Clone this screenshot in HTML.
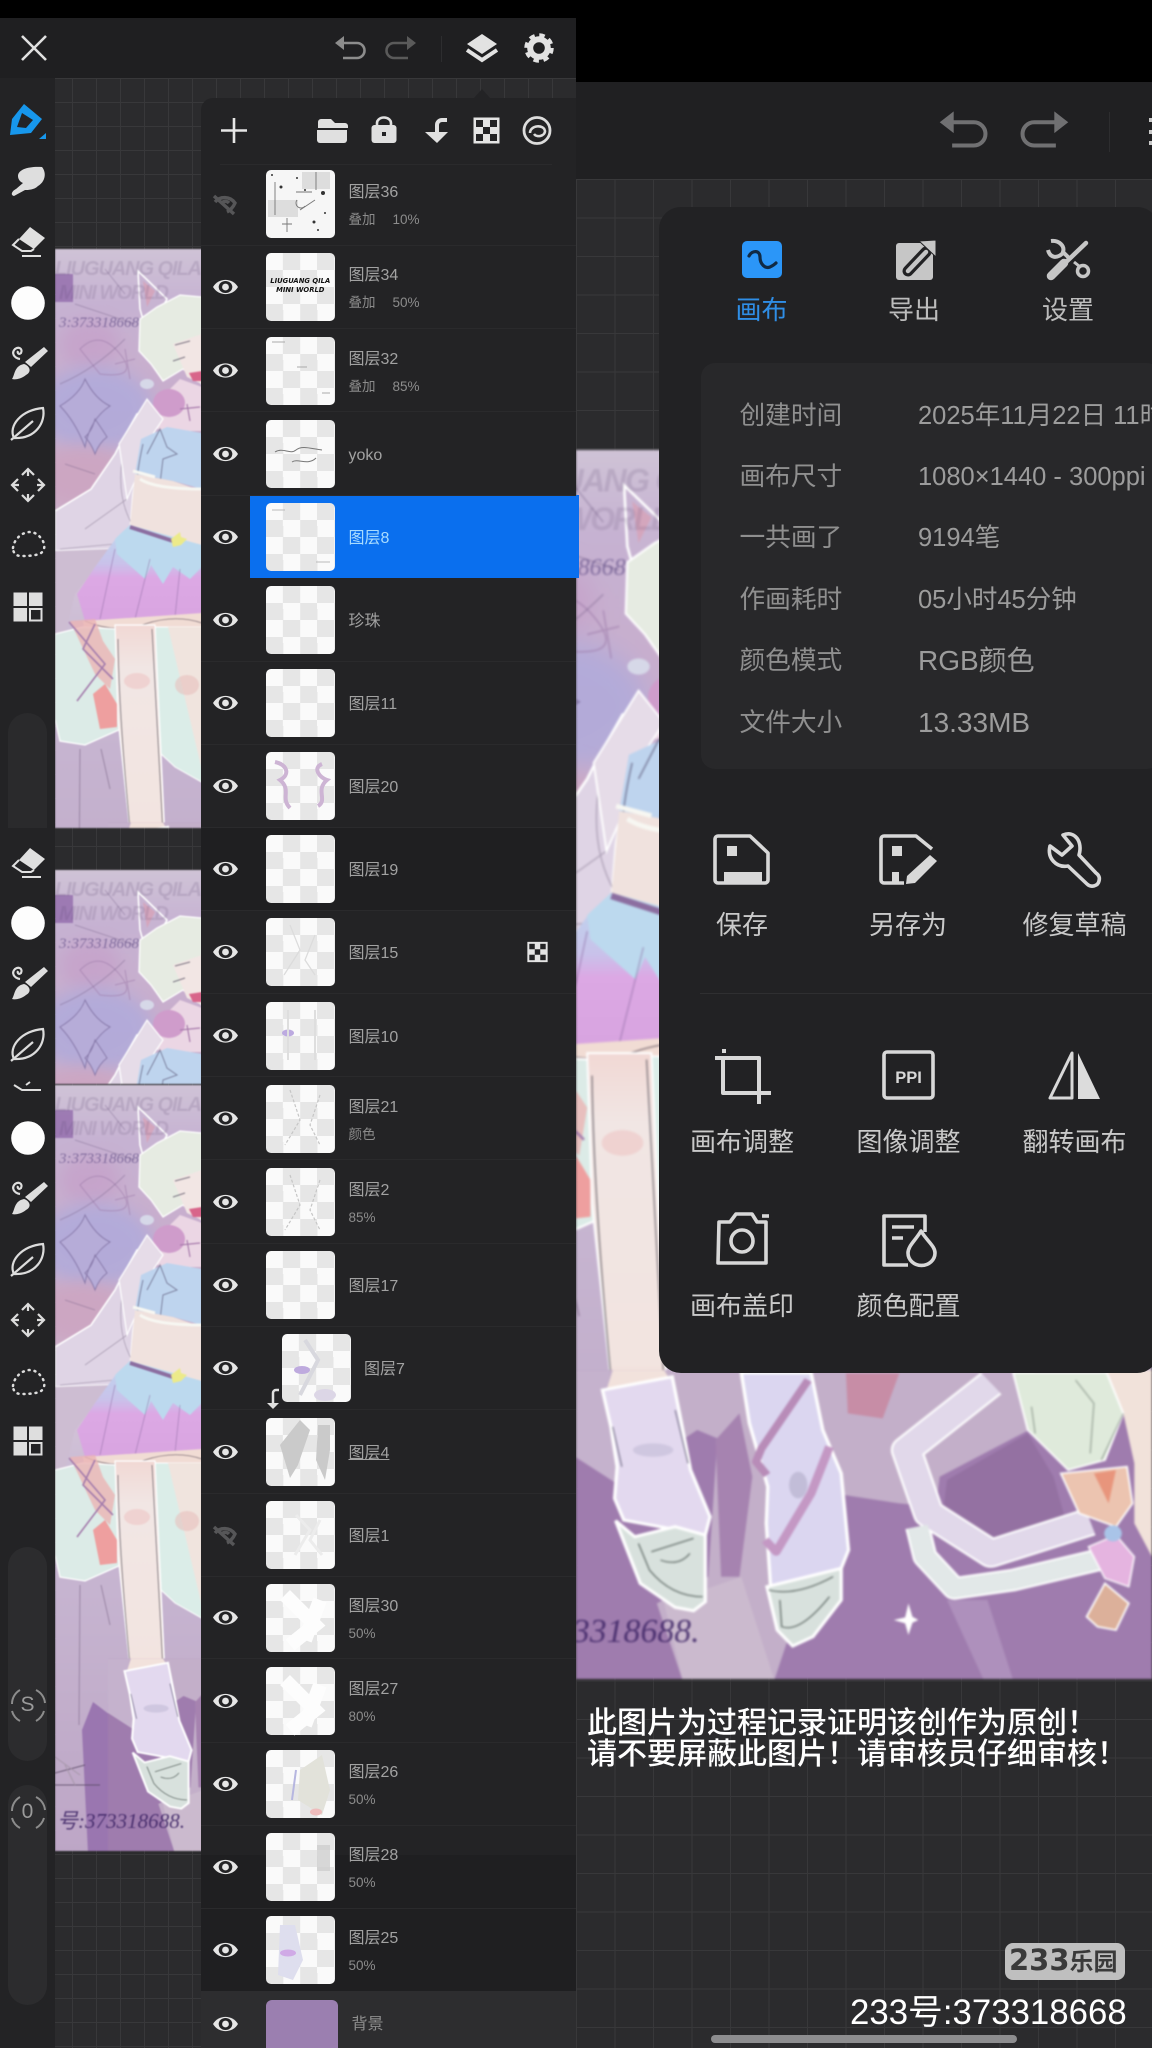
<!DOCTYPE html>
<html><head><meta charset="utf-8"><style>
*{margin:0;padding:0;box-sizing:border-box}
html,body{width:1152px;height:2048px;background:#000;overflow:hidden}
body{position:relative;font-family:"Liberation Sans","Noto Sans CJK SC",sans-serif}
.a{position:absolute}
.grid{background-color:#2b2b2d;background-image:linear-gradient(#38383a 1px,transparent 1px),linear-gradient(90deg,#38383a 1px,transparent 1px)}
.r{position:absolute;left:201px;width:375px;height:83px;border-bottom:1px solid #2a2a2c}
.t{position:absolute;left:65px;top:7.5px;width:68.5px;height:68px;border-radius:5px;background:conic-gradient(#e6e6e6 25%,#fafafa 0 50%,#e6e6e6 0 75%,#fafafa 0) 0 0/34.2px 34px;overflow:hidden}
.n,.s{position:absolute;left:147.5px;height:0;line-height:0;white-space:nowrap}
.n{font-size:16px;color:#a2a2a2;top:43.5px}
.n.u{top:30.5px}
.s{font-size:13.5px;color:#8c8c8c;top:57.5px}
.s span{margin-left:17px}
.c{position:absolute;height:0;line-height:0;white-space:nowrap;text-align:center;transform:translateX(-50%);font-size:26px;color:#c9c9c9}
.l{position:absolute;left:739.5px;height:0;line-height:0;font-size:25.7px;color:#8f8f8f;white-space:nowrap}
.v{position:absolute;left:918px;height:0;line-height:0;font-size:25.5px;color:#9c9c9c;white-space:nowrap}
.ls{filter:blur(.7px)}
</style></head><body>

<!-- right screen -->
<div class="a" style="left:576px;top:82px;width:576px;height:97px;background:#202022"></div>
<div class="a grid" style="left:576px;top:179px;width:576px;height:1869px;background-size:38.5px 38.5px"></div>
<svg class="a" style="left:576px;top:450px;filter:blur(1.1px)" width="576" height="1229" viewBox="53 0 359.1 766.2" preserveAspectRatio="none">
<defs>
<linearGradient id="ag" x1="0" y1="0" x2="0" y2="1"><stop offset="0" stop-color="#cfc3d6"/><stop offset=".07" stop-color="#c6b2d2"/><stop offset=".18" stop-color="#c8aecd"/><stop offset=".35" stop-color="#cbafc9"/><stop offset=".42" stop-color="#d4c4d8"/><stop offset=".5" stop-color="#cbbcd4"/><stop offset=".65" stop-color="#c6b4d0"/><stop offset=".8" stop-color="#c2aecb"/><stop offset="1" stop-color="#bda6c6"/></linearGradient>
<linearGradient id="sk" x1="0" y1="0" x2="0" y2="1"><stop offset="0" stop-color="#bcd8ee"/><stop offset=".4" stop-color="#c9c2ea"/><stop offset=".55" stop-color="#dca8e4"/><stop offset="1" stop-color="#d8a4e0"/></linearGradient>
<linearGradient id="lg" x1="0" y1="0" x2="0" y2="1"><stop offset="0" stop-color="#f1d8d4"/><stop offset=".2" stop-color="#f1e6e4"/><stop offset=".9" stop-color="#f2e4e0"/><stop offset="1" stop-color="#f2d4cc"/></linearGradient>
<filter id="bl" x="-30%" y="-30%" width="160%" height="160%"><feGaussianBlur stdDeviation="8"/></filter>
<g id="art">
<rect width="412" height="766" fill="url(#ag)"/>
<rect x="0" y="25" width="18" height="28" fill="#8e66a8" opacity=".75"/>
<ellipse cx="35" cy="95" rx="30" ry="25" fill="#c499c6" opacity=".5" filter="url(#bl)"/>
<ellipse cx="40" cy="160" rx="58" ry="42" fill="#aeaadc" opacity=".8" filter="url(#bl)"/>
<ellipse cx="28" cy="228" rx="50" ry="30" fill="#cca6c2" filter="url(#bl)"/>
<path d="M5,157 Q25,145 30,130 Q40,150 55,157 Q35,170 30,198 Q20,172 5,157ZM40,170 Q47,180 52,188 Q44,194 40,205 Q36,194 30,188 Q37,182 40,170Z" fill="#b6acd8" stroke="#78689a" stroke-width="1" stroke-opacity=".7"/>
<path d="M25,100Q45,80 65,105T45,125ZM60,115L80,110M70,100L75,130" fill="none" stroke="#9a78a8" stroke-width="1" opacity=".55"/>
<path d="M20,55L80,75M50,20L70,45M5,135Q40,120 70,90M10,215L40,225" stroke="#6e5a80" stroke-width="1" opacity=".35" fill="none"/>
<!-- sleeve -->
<polygon points="0,262 36,240 60,205 65,195 82,165 98,175 85,205 78,245 75,282 55,300 0,302" fill="#dfd4e5" stroke="#fff" stroke-width="1.6"/>
<path d="M5,300L60,295M30,280L72,250M68,205Q60,250 80,280" stroke="#8d8098" stroke-width=".8" fill="none" opacity=".6"/>
<polygon points="0,302 55,300 20,345 10,385 0,385" fill="#cdbdd2"/>
<!-- hair/head -->
<polygon points="83,22 112,50 102,68 90,78 85,60" fill="#c8b4d2" stroke="#fff" stroke-width="1.6"/>
<polygon points="88,32 100,42 92,58" fill="#d9a0b4" opacity=".7"/>
<polygon points="95,160 125,130 147,138 147,182 108,182 90,175" fill="#ebd6e4"/>
<polygon points="85,70 102,58 125,46 147,48 147,135 128,120 108,132 96,115 84,102" fill="#e6ebe2" stroke="#fff" stroke-width="1.3"/>
<polygon points="118,95 147,85 147,135 132,128" fill="#f2e6e4"/>
<path d="M120,96L135,92M118,112L130,108" stroke="#5f586a" stroke-width="1" opacity=".8"/>
<polygon points="134,124 147,122 147,132 138,132" fill="#d8658a"/>
<ellipse cx="114" cy="154" rx="16" ry="14" fill="#cf9ccb"/>
<ellipse cx="92" cy="135" rx="7" ry="5" fill="#d6d8e8"/>
<path d="M132,155L135,172M125,160L145,158" stroke="#a87cac" stroke-width="1.2"/>
<!-- arm -->
<polygon points="64,195 92,150 108,170 88,200 80,232 72,250" fill="#e6dce8" stroke="#fff" stroke-width="1.2"/>
<!-- top -->
<polygon points="86,190 112,178 147,184 147,240 118,232 80,225" fill="#bed4ee"/>
<path d="M92,205L105,180L112,198L122,205L108,210L105,235M88,195Q80,230 82,250" fill="none" stroke="#6a6a88" stroke-width="1" opacity=".75"/>
<polygon points="80,225 118,232 147,242 147,296 118,290 75,277" fill="#f0e2de"/>
<path d="M78,222L100,228M85,230Q100,240 147,240" stroke="#f7f7f2" stroke-width="3" fill="none"/>
<!-- skirt -->
<polygon points="62,288 75,276 147,298 147,368 30,372 22,345 40,318" fill="url(#sk)"/>
<polygon points="62,305 90,330 96,316 108,335 118,318 135,330 147,318 147,296 75,276 60,290" fill="#bcd9ee"/>
<path d="M75,278L118,292" stroke="#8c6ea0" stroke-width="4"/>
<polygon points="116,290 125,283 126,288 132,290 126,296 118,298" fill="#ecea8a"/>
<path d="M60,300L45,370M95,310L80,370M125,320L120,368" stroke="#8a68a0" stroke-width=".9" opacity=".5"/>
<polygon points="28,372 147,364 147,382 30,385" fill="#f1dcd4"/>
<path d="M30,372Q60,385 90,375T147,374" stroke="#8a7a80" stroke-width=".8" fill="none"/>
<!-- lower cloth & legs -->
<polygon points="0,385 28,378 62,380 66,480 30,496 5,492 0,470" fill="#dcebe7" stroke="#fff" stroke-width="1.3"/>
<polygon points="15,372 40,370 48,392 60,410 55,440 40,425" fill="#ebb4b4" opacity=".8"/>
<path d="M14,373L50,415L22,452M40,375L28,400L58,430" stroke="#a47cac" stroke-width="1.6" fill="none"/>
<polygon points="38,445 50,435 62,455 62,478 45,480" fill="#ee9f9f"/>
<polygon points="100,378 150,378 150,535 120,518 106,505 103,450" fill="#dbede8" stroke="#fff" stroke-width="1"/>
<polygon points="113,378 150,378 150,534" fill="#f0e4de"/>
<polygon points="60,376 100,376 110,590 76,592 63,470" fill="url(#lg)" stroke="#fff" stroke-width="1.2"/>
<path d="M97,380L108,585M63,390Q64,470 76,590" stroke="#5c5860" stroke-width=".8" fill="none" opacity=".8"/>
<ellipse cx="82" cy="432" rx="13" ry="8" fill="#eec8c6" opacity=".65"/>
<ellipse cx="132" cy="436" rx="12" ry="10" fill="#e8c0bc" opacity=".6"/>
<path d="M25,500L24,640M46,500L55,540" stroke="#8f7a9a" stroke-width="1.1" fill="none" opacity=".7"/>
<polygon points="27,645 38,617 75,645 78,678 113,768 33,768" fill="#9a76b0"/>
<path d="M0,700H45M0,688L30,680" stroke="#5a4a66" stroke-width="1" opacity=".8"/>
<path d="M10,680L20,700M0,672L25,690" stroke="#a898ac" stroke-width="1"/>
<!-- lower group drawn in zoom coords -->
<g transform="matrix(0.229,0,0,0.2078,53,573.6)">
<rect x="0" y="0" width="1568" height="930" fill="#9f7cae"/>
<polygon points="0,0 100,0 110,340 0,262" fill="#c5b2cd"/>
<polygon points="90,0 1250,0 1250,170 990,320 980,410 880,400 730,375 700,400 540,930 290,930 220,700 360,620 385,205 330,180 110,340" fill="#c3afc9"/>
<polygon points="380,210 445,130 480,320 445,620 395,620" fill="#a683b0"/>
<polygon points="240,700 450,620 540,930 290,930" fill="#cbbace"/>
<polygon points="735,10 880,10 835,145 740,130" fill="#c78da6"/>
<polygon points="1010,330 1230,190 1300,320 1330,440 1120,510 1000,420" fill="#9471a2"/>
<polygon points="1010,690 1120,690 1190,930 1110,930" fill="#ae90bc"/>
<polyline points="1130,40 900,240 960,430 1130,550 1400,455" fill="none" stroke="#fff" stroke-width="86" stroke-linejoin="round"/>
<polyline points="930,470 950,560 1030,655 1190,630 1420,570" fill="none" stroke="#fff" stroke-width="68" stroke-linejoin="round"/>
<polyline points="1130,40 900,240 960,430 1130,550 1400,455" fill="none" stroke="#e1d8ea" stroke-width="74" stroke-linejoin="round"/>
<polyline points="930,470 950,560 1030,655 1190,630 1420,570" fill="none" stroke="#e2e8e8" stroke-width="56" stroke-linejoin="round"/>
<polygon points="1440,0 1568,0 1568,560 1520,460 1520,280 1490,130" fill="#f1e2da"/>
<polygon points="1190,8 1445,8 1490,130 1440,270 1340,300 1230,180" fill="#dfeadb" stroke="#fff" stroke-width="5"/>
<path d="M1240,110L1250,190M1360,30L1410,100L1400,250M1490,130L1430,270" stroke="#6e7a70" stroke-width="3" fill="none" opacity=".7"/>
<polygon points="1320,310 1500,290 1515,400 1470,470 1370,430" fill="#ecc4b0" stroke="#fff" stroke-width="5"/>
<polygon points="1410,310 1470,300 1450,400" fill="#e8957c"/>
<polygon points="1390,740 1440,640 1505,700 1470,780 1420,770" fill="#dcb09a" stroke="#fff" stroke-width="5"/>
<polygon points="1395,530 1470,495 1520,560 1505,650 1440,625" fill="#e5b4e0" stroke="#fff" stroke-width="4"/>
<circle cx="1462" cy="490" r="24" fill="#a9c4e8"/>
<path d="M905,700 L916,740 L932,750 L916,758 L905,795 L896,760 L865,750 L896,742Z" fill="#fff"/>
<!-- left foot -->
<polygon points="100,0 240,0 262,40 80,70" fill="#f2e2dc"/>
<polygon points="72,60 262,20 282,130 312,300 365,440 352,495 130,450 105,385 112,290 95,170" fill="#e3d9ef" stroke="#fff" stroke-width="9"/>
<ellipse cx="210" cy="240" rx="55" ry="20" fill="#cfc7e0"/>
<path d="M100,170L125,290M270,120L305,280" stroke="#54506a" stroke-width="3" opacity=".8"/>
<polygon points="108,452 160,500 270,470 352,495 352,695 320,722 270,712 175,640" fill="#d8e1dd" stroke="#fff" stroke-width="9"/>
<path d="M170,520L200,600Q260,680 345,680M205,545L320,505M230,570Q280,590 310,550" stroke="#4f5a56" stroke-width="3" fill="none"/>
<!-- right foot -->
<polygon points="450,8 640,8 672,180 722,310 742,540 722,595 530,655 518,460 522,350 472,160" fill="#dbd6f0" stroke="#fff" stroke-width="9"/>
<ellipse cx="605" cy="345" rx="25" ry="40" fill="#c2bdd8"/>
<polygon points="520,650 722,595 722,690 645,800 590,828 548,780" fill="#d8e1dd" stroke="#fff" stroke-width="9"/>
<path d="M525,660Q600,680 700,620M555,690L560,770Q610,790 690,680" stroke="#4f5a56" stroke-width="3" fill="none"/>
<path d="M632,30L505,235L490,275L520,315" stroke="#b88cb8" stroke-width="22" fill="none" stroke-linejoin="round"/>
<path d="M690,230L640,370L545,545L515,510" stroke="#c498c4" stroke-width="24" fill="none" stroke-linejoin="round"/>
</g>
</g>
</defs>
<use href="#art"/>
<text x="0" y="26" font-family="Liberation Sans" font-size="20" font-weight="700" font-style="italic" fill="#54406a" opacity=".16" textLength="147">LIUGUANG QILA</text>
<text x="4" y="50" font-family="Liberation Sans" font-size="20" font-weight="700" font-style="italic" fill="#54406a" opacity=".14" textLength="110">MINI WORLD</text>
<text x="4" y="78" font-family="Liberation Serif" font-size="15" font-style="italic" fill="#4d3a78" opacity=".55" textLength="80">3:373318668</text>
<text x="2" y="743" font-family="Liberation Serif" font-size="21" font-style="italic" fill="#3e2566" opacity=".85" textLength="128">号:373318688.</text>
</svg>

<!-- popup -->
<div class="a" style="left:659px;top:207px;width:500px;height:1166px;background:#222224;border-radius:22px"></div>
<div class="a" style="left:701px;top:363px;width:460px;height:406px;background:#28282a;border-radius:14px"></div>
<div class="a" style="left:700px;top:993px;width:452px;height:1px;background:#2f2f31"></div>

<div class="c" style="left:761.5px;top:310px;color:#2f8ee6">画布</div>
<div class="c" style="left:914px;top:310px;color:#bcbcbc">导出</div>
<div class="c" style="left:1068px;top:310px;color:#bcbcbc">设置</div>

<div class="l" style="top:415.5px">创建时间</div><div class="v" style="top:415.5px">2025年11月22日 11时</div>
<div class="l" style="top:477px">画布尺寸</div><div class="v" style="top:477px">1080×1440 - 300ppi</div>
<div class="l" style="top:538px">一共画了</div><div class="v" style="top:538px">9194笔</div>
<div class="l" style="top:599.5px">作画耗时</div><div class="v" style="top:599.5px">05小时45分钟</div>
<div class="l" style="top:660.5px">颜色模式</div><div class="v" style="top:660.5px;font-size:28px">RGB颜色</div>
<div class="l" style="top:722.5px">文件大小</div><div class="v" style="top:722.5px;font-size:28px">13.33MB</div>

<div class="c" style="left:742px;top:925px">保存</div>
<div class="c" style="left:908px;top:925px">另存为</div>
<div class="c" style="left:1074.5px;top:925px">修复草稿</div>
<div class="c" style="left:742px;top:1142px">画布调整</div>
<div class="c" style="left:908.5px;top:1142px">图像调整</div>
<div class="c" style="left:1074.5px;top:1142px">翻转画布</div>
<div class="c" style="left:742px;top:1306px">画布盖印</div>
<div class="c" style="left:908.5px;top:1306px">颜色配置</div>

<div class="a" style="left:587px;top:1709px;font-size:30px;line-height:30.5px;color:#fff;white-space:nowrap;font-weight:500">此图片为过程记录证明该创作为原创！<br>请不要屏蔽此图片！请审核员仔细审核！</div>
<div class="a" style="left:1005px;top:1943px;width:120px;height:37px;background:#bfbfbf;border-radius:8px;color:#3a3a3a;font-weight:700;line-height:37px;white-space:nowrap;padding-left:4px"><span style="font:700 29px 'DejaVu Sans',sans-serif">233</span><span style="font-size:24px">乐园</span></div>
<div class="a" style="left:850px;top:1991px;width:290px;font-size:34.8px;line-height:43px;color:#fff;white-space:nowrap">233号:373318668</div>
<div class="a" style="left:711px;top:2035px;width:306px;height:8px;background:#8d8d8f;border-radius:4px"></div>

<!-- left screen -->
<div class="a grid" style="left:0;top:78px;width:576px;height:1970px;background-size:24px 24px"></div>
<div class="a" style="left:0;top:18px;width:576px;height:60px;background:#1f1f21"></div>
<svg class="a ls" style="left:55px;top:249px" width="147" height="579" viewBox="0 0 147 579">
<use href="#art"/>
<text x="0" y="26" font-family="Liberation Sans" font-size="20" font-weight="700" font-style="italic" fill="#54406a" opacity=".16" textLength="147">LIUGUANG QILA</text>
<text x="4" y="50" font-family="Liberation Sans" font-size="20" font-weight="700" font-style="italic" fill="#54406a" opacity=".14" textLength="110">MINI WORLD</text>
<text x="4" y="78" font-family="Liberation Serif" font-size="15" font-style="italic" fill="#4d3a78" opacity=".55" textLength="80">3:373318668</text>
</svg>
<svg class="a ls" style="left:55px;top:870px" width="147" height="214" viewBox="0 0 147 214">
<use href="#art"/>
<text x="0" y="26" font-family="Liberation Sans" font-size="20" font-weight="700" font-style="italic" fill="#54406a" opacity=".16" textLength="147">LIUGUANG QILA</text>
<text x="4" y="50" font-family="Liberation Sans" font-size="20" font-weight="700" font-style="italic" fill="#54406a" opacity=".14" textLength="110">MINI WORLD</text>
<text x="4" y="78" font-family="Liberation Serif" font-size="15" font-style="italic" fill="#4d3a78" opacity=".55" textLength="80">3:373318668</text>
</svg>
<svg class="a ls" style="left:55px;top:1085px" width="147" height="766" viewBox="0 0 147 766">
<use href="#art"/>
<text x="0" y="26" font-family="Liberation Sans" font-size="20" font-weight="700" font-style="italic" fill="#54406a" opacity=".16" textLength="147">LIUGUANG QILA</text>
<text x="4" y="50" font-family="Liberation Sans" font-size="20" font-weight="700" font-style="italic" fill="#54406a" opacity=".14" textLength="110">MINI WORLD</text>
<text x="4" y="78" font-family="Liberation Serif" font-size="15" font-style="italic" fill="#4d3a78" opacity=".55" textLength="80">3:373318668</text>
<text x="2" y="743" font-family="Liberation Serif" font-size="21" font-style="italic" fill="#3e2566" opacity=".85" textLength="128">号:373318688.</text>
</svg>

<div class="a" style="left:0;top:78px;width:55px;height:1970px;background:#232325"></div>
<div class="a" style="left:8px;top:713px;width:39px;height:115px;background:#2a2a2c;border-radius:20px 20px 0 0"></div>
<div class="a" style="left:8px;top:1547px;width:39px;height:214px;background:#2c2c2e;border-radius:20px"></div>
<div class="a" style="left:8px;top:1785px;width:39px;height:220px;background:#2c2c2e;border-radius:20px"></div>
<div class="a" style="left:0;top:1705px;width:55px;height:0;line-height:0;text-align:center;font-size:21px;color:#9a9a9a">S</div>
<div class="a" style="left:0;top:1812px;width:55px;height:0;line-height:0;text-align:center;font-size:21px;color:#9a9a9a">0</div>

<div class="a" style="left:201px;top:98px;width:375px;height:1950px;background:#232325;border-radius:12px 0 0 0"></div>
<div class="a" style="left:201px;top:828px;width:375px;height:82px;background:#1f1f21"></div>
<div class="a" style="left:201px;top:1855px;width:375px;height:136px;background:#1f1f21"></div>
<div class="a" style="left:201px;top:1991px;width:375px;height:57px;background:#2d2d2f"></div>
<div class="a" style="left:250px;top:495px;width:329px;height:83px;background:#0a6fee"></div>

<div class="r" style="top:162.5px"><div class="t" style="background:#f6f6f6"></div><div class="n u">图层36</div><div class="s">叠加<span>10%</span></div></div>
<div class="r" style="top:245.5px"><div class="t"><div style="font:italic 700 6.8px/9px 'DejaVu Sans',sans-serif;color:#111;text-align:center;margin-top:24px;white-space:nowrap">LIUGUANG QILA<br>MINI WORLD</div></div><div class="n u">图层34</div><div class="s">叠加<span>50%</span></div></div>
<div class="r" style="top:329px"><div class="t"></div><div class="n u">图层32</div><div class="s">叠加<span>85%</span></div></div>
<div class="r" style="top:412.5px"><div class="t"></div><div class="n">yoko</div></div>
<div class="r" style="top:495.5px;border-color:transparent"><div class="t"></div><div class="n" style="color:#a8dcff">图层8</div></div>
<div class="r" style="top:578.5px"><div class="t"></div><div class="n">珍珠</div></div>
<div class="r" style="top:661.5px"><div class="t"></div><div class="n">图层11</div></div>
<div class="r" style="top:744.5px"><div class="t"></div><div class="n">图层20</div></div>
<div class="r" style="top:827.5px"><div class="t"></div><div class="n">图层19</div></div>
<div class="r" style="top:910.5px"><div class="t"></div><div class="n">图层15</div></div>
<div class="r" style="top:994px"><div class="t"></div><div class="n">图层10</div></div>
<div class="r" style="top:1077px"><div class="t"></div><div class="n u">图层21</div><div class="s">颜色</div></div>
<div class="r" style="top:1160.5px"><div class="t"></div><div class="n u">图层2</div><div class="s">85%</div></div>
<div class="r" style="top:1243.5px"><div class="t"></div><div class="n">图层17</div></div>
<div class="r" style="top:1326.5px"><div class="t" style="left:81px"></div><div class="n" style="left:163px">图层7</div></div>
<div class="r" style="top:1410.5px"><div class="t"></div><div class="n" style="text-decoration:underline">图层4</div></div>
<div class="r" style="top:1493.5px"><div class="t"></div><div class="n">图层1</div></div>
<div class="r" style="top:1576px"><div class="t"></div><div class="n u">图层30</div><div class="s">50%</div></div>
<div class="r" style="top:1659.5px"><div class="t"></div><div class="n u">图层27</div><div class="s">80%</div></div>
<div class="r" style="top:1742.5px"><div class="t"></div><div class="n u">图层26</div><div class="s">50%</div></div>
<div class="r" style="top:1825.5px"><div class="t"></div><div class="n u">图层28</div><div class="s">50%</div></div>
<div class="r" style="top:1908.5px;border:0"><div class="t"></div><div class="n u">图层25</div><div class="s">50%</div></div>
<div class="a" style="left:266px;top:2000px;width:72px;height:48px;background:#9b7fb0;border-radius:6px 6px 0 0"></div>
<div class="a" style="left:351.5px;top:2025px;height:0;line-height:0;font-size:16px;color:#8e8e8e">背景</div>

<!-- all icons -->
<svg class="a" style="left:0;top:0" width="1152" height="2048" viewBox="0 0 1152 2048">
<defs>
<g id="eye"><path d="M-12.5,0C-7,-9.5 7,-9.5 12.5,0C7,9.5 -7,9.5 -12.5,0Z" fill="#e6e6e6"/><ellipse cx="0" cy="0" rx="6.8" ry="6" fill="#232325"/><circle r="3.4" fill="#e6e6e6"/></g>
<g id="eyeh" fill="none" stroke="#565658" stroke-width="3.4"><path d="M-10,-2C-5,-8 5,-8 10,-1C8,4 4,7 2,8"/><path d="M-11,-8L9,10"/><path d="M-4,0a5,5 0 0 1 8,-1"/></g>
<g id="eraser"><path d="M2,-15L17,-4L6,7L-9,-3Z" fill="#e0e0e0"/><path d="M-9,-3L-15,3L-6,9H3L6,7" fill="none" stroke="#e0e0e0" stroke-width="2"/><path d="M-6,14H13" stroke="#e0e0e0" stroke-width="2"/></g>
<g id="brush"><path d="M16,-17L20,-13L3,3L-3,-2Z" fill="#dedede"/><path d="M-4,0C2,2 4,8 -2,11C-7,15 -13,16 -16,15C-13,11 -14,2 -4,0Z" fill="#dedede"/><path d="M-8,-5C-14,-6 -17,-11 -13,-15C-9,-18 -5,-15 -7,-11C-9,-9 -11,-11 -10,-13" fill="none" stroke="#dedede" stroke-width="2.2"/></g>
<g id="leaf" fill="none" stroke="#dcdcdc" stroke-width="2.2"><path d="M-14,14C-20,2 -7,-14 15,-16C18,-2 8,15 -14,14Z"/><path d="M-17,16L5,-3"/></g>
<g id="move" fill="none" stroke="#dcdcdc" stroke-width="2.2"><path d="M-6,-10L0,-16L6,-10M-6,10L0,16L6,10M-10,-6L-16,0L-10,6M10,-6L16,0L10,6"/><path d="M0,-16V-9M0,16V9M-16,0H-9M16,0H9"/></g>
<path id="lasso" d="M-15,3C-14,-6 -6,-13 2,-13C6,-13 9,-11 12,-8C17,-3 18,5 13,8C8,11 -2,11 -7,11C-12,11 -15,8 -15,3Z" fill="none" stroke="#dcdcdc" stroke-width="2.5" stroke-linecap="round" stroke-dasharray="1 5"/>
<g id="gridi"><rect x="-14.5" y="-14.5" width="13.5" height="13.5" fill="#dedede"/><rect x="1" y="-14.5" width="13.5" height="13.5" fill="#dedede"/><rect x="-14.5" y="1" width="13.5" height="13.5" fill="#dedede"/><rect x="2" y="2" width="11.5" height="11.5" fill="none" stroke="#dedede" stroke-width="2"/></g>
<g id="chk"><rect x="-13" y="-13" width="26" height="26" fill="#e4e4e4"/><rect x="-10.5" y="-10.5" width="7" height="7" fill="#232325"/><rect x="3.5" y="-10.5" width="7" height="7" fill="#232325"/><rect x="-3.5" y="-3.5" width="7" height="7" fill="#232325"/><rect x="-10.5" y="3.5" width="7" height="7" fill="#232325"/><rect x="3.5" y="3.5" width="7" height="7" fill="#232325"/></g>
<g id="undo"><path d="M-15,-5L-6,-12V2Z" fill="currentColor"/><path d="M-7,-5H7a7.5,7.5 0 0 1 0,15H-7" fill="none" stroke="currentColor" stroke-width="2.6"/></g>
</defs>

<!-- top bar left -->
<path d="M22,36L46,60M46,36L22,60" stroke="#e0e0e0" stroke-width="2.6"/>
<use href="#undo" transform="translate(350,48)" style="color:#8c8c8c"/>
<use href="#undo" transform="translate(401,48) scale(-1,1)" style="color:#5a5a5a"/>
<rect x="441" y="36" width="1" height="26" fill="#2d2d2f"/>
<path d="M482,34L497,44L482,54L467,44Z" fill="#e2e2e2"/><path d="M467,50L482,60L497,50" fill="none" stroke="#e2e2e2" stroke-width="4"/>
<circle cx="539" cy="48" r="8.8" fill="none" stroke="#e2e2e2" stroke-width="6"/><circle cx="539" cy="48" r="12.5" fill="none" stroke="#e2e2e2" stroke-width="4.5" stroke-dasharray="5.3 4.5"/>
<path d="M474,98L482,89L490,98Z" fill="#232325"/>

<!-- layer panel toolbar -->
<path d="M221,130.5H247M234,118V143" stroke="#e6e6e6" stroke-width="2.6"/>
<path d="M318,122a3,3 0 0 1 3,-3h10l4,4h10a3,3 0 0 1 3,3v2h-30Z" fill="#e0e0e0"/><path d="M317,130h30v10a3,3 0 0 1 -3,3h-24a3,3 0 0 1 -3,-3Z" fill="#e0e0e0"/>
<path d="M377,127v-4a7,5.5 0 0 1 14,0v4" fill="none" stroke="#e0e0e0" stroke-width="2.6"/><rect x="371.5" y="125" width="25" height="18" rx="3" fill="#e0e0e0"/><rect x="382" y="132" width="4" height="4" fill="#232325"/>
<path d="M447,120H442a5,5 0 0 0 -5,5V133" fill="none" stroke="#e0e0e0" stroke-width="4"/><path d="M425,132L437,143L448,132Z" fill="#e0e0e0"/>
<use href="#chk" transform="translate(486.5,130.5)"/>
<circle cx="537" cy="130.5" r="13" fill="none" stroke="#dcdcdc" stroke-width="2.8"/><path d="M530,133C530,125 544,124 545,131C545,136 537,138 534,134" fill="none" stroke="#dcdcdc" stroke-width="2.6"/>
<rect x="220" y="164" width="332" height="1" fill="#2a2a2c"/>

<!-- eyes -->
<use href="#eyeh" transform="translate(225,204)"/>
<use href="#eye" transform="translate(225.5,287)"/><use href="#eye" transform="translate(225.5,370.5)"/><use href="#eye" transform="translate(225.5,454)"/><use href="#eye" transform="translate(225.5,537)"/><use href="#eye" transform="translate(225.5,620)"/><use href="#eye" transform="translate(225.5,703)"/><use href="#eye" transform="translate(225.5,786)"/><use href="#eye" transform="translate(225.5,869)"/><use href="#eye" transform="translate(225.5,952)"/><use href="#eye" transform="translate(225.5,1035.5)"/><use href="#eye" transform="translate(225.5,1118.5)"/><use href="#eye" transform="translate(225.5,1202)"/><use href="#eye" transform="translate(225.5,1285)"/><use href="#eye" transform="translate(225.5,1368)"/><use href="#eye" transform="translate(225.5,1452)"/>
<use href="#eyeh" transform="translate(225,1535)"/>
<use href="#eye" transform="translate(225.5,1617.5)"/><use href="#eye" transform="translate(225.5,1701)"/><use href="#eye" transform="translate(225.5,1784)"/><use href="#eye" transform="translate(225.5,1867)"/><use href="#eye" transform="translate(225.5,1950)"/><use href="#eye" transform="translate(225.5,2024)"/>
<use href="#chk" transform="translate(537.5,952) scale(.78)"/>
<path d="M279,1390H276a3,3 0 0 0 -3,3V1404" fill="none" stroke="#e0e0e0" stroke-width="2.5"/><path d="M267,1403L273,1409L279,1403Z" fill="#e0e0e0"/>

<!-- sidebar 1 -->
<path d="M24,104L42,119L31,133L10,135L12,119Z" fill="#1797ec"/><path d="M22,113L33,120L26,128L17,127Z" fill="#232325"/><path d="M39,139L46,133V139Z" fill="#1797ec"/>
<path d="M18,176C18,169 30,166 42,167C47,173 45,182 38,186C34,190 28,190 25,190L14,196C10,195 12,191 16,189L23,183C20,182 18,179 18,176Z" fill="#dedede"/>
<use href="#eraser" transform="translate(28,242)"/>
<circle cx="28" cy="303" r="16.8" fill="#fdfdfd"/>
<use href="#brush" transform="translate(28,364)"/>
<use href="#leaf" transform="translate(28,424)"/>
<use href="#move" transform="translate(28,485)"/>
<use href="#lasso" transform="translate(28,545)"/>
<use href="#gridi" transform="translate(28,607)"/>
<!-- sidebar 2 -->
<use href="#eraser" transform="translate(28,863)"/>
<circle cx="28" cy="923" r="16.8" fill="#fdfdfd"/>
<use href="#brush" transform="translate(28,984)"/>
<use href="#leaf" transform="translate(28,1045)"/>
<path d="M14,1085L22,1090H41M26,1085L30,1082" fill="none" stroke="#dedede" stroke-width="2"/>
<circle cx="28" cy="1138" r="16.8" fill="#fdfdfd"/>
<use href="#brush" transform="translate(28,1199)"/>
<use href="#leaf" transform="translate(28,1260)"/>
<use href="#move" transform="translate(28,1320)"/>
<use href="#lasso" transform="translate(28,1383)"/>
<use href="#gridi" transform="translate(28,1441)"/>
<path d="M12,1704A16,16 0 0 1 20,1690M36,1690A16,16 0 0 1 45,1703M44,1711A17,17 0 0 1 36,1721M20,1721A16,16 0 0 1 12,1711" fill="none" stroke="#8c8c8c" stroke-width="2"/>
<path d="M12,1811A16,16 0 0 1 20,1797M36,1797A16,16 0 0 1 45,1810M44,1818A17,17 0 0 1 36,1828M20,1828A16,16 0 0 1 12,1818" fill="none" stroke="#8c8c8c" stroke-width="2"/>

<!-- thumb marks -->
<g fill="#333"><circle cx="281" cy="187" r="1.5"/><circle cx="323" cy="193" r="2"/><circle cx="280" cy="203" r="2"/><circle cx="314" cy="222" r="1.5"/><circle cx="325" cy="180" r="1"/><circle cx="297" cy="178" r="1"/><circle cx="305" cy="190" r="1"/><circle cx="325" cy="213" r="1"/><circle cx="272" cy="175" r="1"/><circle cx="290" cy="212" r="1"/><circle cx="318" cy="230" r="1"/></g>
<g fill="#ddd"><rect x="268" y="200" width="30" height="17"/><rect x="302" y="172" width="28" height="17"/></g>
<path d="M282,224H292M287,218V232M296,192H312M316,172V190M297,200a5,5 0 1 0 8,6M275,182V215M300,210L315,200" stroke="#777" stroke-width=".9" fill="none"/>
<path d="M275,452C283,447 290,455 296,450S312,449 322,450M292,462C298,458 308,466 316,458" stroke="#777" stroke-width="1" fill="none"/>
<path d="M297,367H307M272,342H285M322,393H330" stroke="#aaa" stroke-width="1"/>
<path d="M272,510H285M316,562H330" stroke="#bbb" stroke-width="1"/>
<path d="M275,762C288,765 290,775 280,780C292,790 280,798 290,808M322,764C312,768 320,778 327,780C315,790 328,800 318,806" fill="none" stroke="#cdb4d4" stroke-width="4"/>
<path d="M290,925L300,950L284,975M315,935L305,960L315,975" stroke="#dcdcdc" stroke-width="1.3" fill="none"/>
<ellipse cx="288" cy="1033" rx="6" ry="3.5" fill="#bcaae0"/><path d="M288,1010V1060M315,1010V1060" stroke="#dedede" stroke-width="2"/>
<path d="M290,1090L300,1120L285,1145M320,1095L310,1125L320,1145M290,1175L300,1205L285,1230M320,1180L310,1210L320,1230" stroke="#c6c6c6" stroke-width="1.2" fill="none" stroke-dasharray="3 2"/>
<path d="M305,1340L318,1360L300,1395" stroke="#d8d8de" stroke-width="4" fill="none"/><ellipse cx="302" cy="1370" rx="8" ry="4" fill="#beaade"/><ellipse cx="325" cy="1395" rx="11" ry="6" fill="#dcd6e6"/>
<path d="M300,1420L310,1430L298,1465L290,1478L280,1445ZM318,1425H330V1450L325,1480L316,1460Z" fill="#cacaca"/>
<path d="M296,1515L310,1530L295,1555M320,1520L310,1540L322,1555" stroke="#ececec" stroke-width="3" fill="none"/>
<path d="M285,1595L315,1625L290,1645M320,1600L305,1640" stroke="#fdfdfd" stroke-width="14" fill="none"/>
<path d="M285,1680L315,1710L290,1730M320,1685L305,1725" stroke="#fdfdfd" stroke-width="14" fill="none"/>
<path d="M322,1755L330,1790L322,1815L298,1800L300,1770Z" fill="#e2e2da"/><path d="M296,1770L292,1800" stroke="#b6b6e0" stroke-width="2"/><ellipse cx="316" cy="1812" rx="6" ry="3.5" fill="#eebcbc"/>
<rect x="317" y="1845" width="13" height="26" fill="#cecece" opacity=".8"/>
<path d="M280,1925L295,1925L303,1960L293,1980L278,1975Z" fill="#dedeee"/><ellipse cx="288" cy="1953" rx="8" ry="3.5" fill="#d0aae6"/>

<!-- right bar -->
<use href="#undo" transform="translate(963,130) scale(1.55)" style="color:#707072"/>
<use href="#undo" transform="translate(1045,130) scale(-1.55,1.55)" style="color:#707072"/>
<rect x="1109" y="112" width="1" height="40" fill="#2d2d2f"/>
<rect x="1149" y="118" width="3" height="4" fill="#c8c8c8"/><rect x="1149" y="130" width="3" height="4" fill="#c8c8c8"/><rect x="1149" y="141" width="3" height="4" fill="#c8c8c8"/>

<!-- tabs -->
<rect x="742" y="241" width="40" height="37" rx="5" fill="#2b96f8"/>
<path d="M749,256C752,250 760,250 760,257C760,264 765,269 770,267C772,266 774,265 776,263" fill="none" stroke="#102a44" stroke-width="3.2" stroke-linecap="round"/>
<path d="M896,246a3,3 0 0 1 3,-3H933V277a3,3 0 0 1 -3,3H899a3,3 0 0 1 -3,-3Z" fill="#c6c6c6"/>
<path d="M908,271L926,252" stroke="#222224" stroke-width="11" stroke-linecap="round"/>
<path d="M908,271L926,252" stroke="#c6c6c6" stroke-width="4.5" stroke-linecap="round"/>
<path d="M919,241L936,240V257Z" fill="#c6c6c6" stroke="#222224" stroke-width="1"/>
<path d="M1063,265L1086,243" stroke="#c6c6c6" stroke-width="4.5" stroke-linecap="round"/>
<path d="M1051,276L1064,263" stroke="#c6c6c6" stroke-width="8.5" stroke-linecap="round"/>
<path d="M1051,241C1059,240 1065,246 1063,252L1070,259M1048,250C1050,258 1057,259 1063,253" fill="none" stroke="#c6c6c6" stroke-width="4"/>
<circle cx="1083" cy="271" r="5.5" fill="none" stroke="#c6c6c6" stroke-width="3.5"/><path d="M1074,262L1079,266" stroke="#c6c6c6" stroke-width="3"/>

<!-- action icons -->
<g fill="none" stroke="#d8d8d8" stroke-width="3.6" stroke-linejoin="round">
<path d="M718,836H750L768,853V880a3,3 0 0 1 -3,3H718a3,3 0 0 1 -3,-3V839a3,3 0 0 1 3,-3Z"/>
<path d="M904,883H884a3,3 0 0 1 -3,-3V839a3,3 0 0 1 3,-3H916L932,849"/>
<path d="M1063,835L1072,846L1062,855L1050,846C1047,858 1056,868 1068,866L1087,884C1091,888 1098,886 1099,881C1100,878 1099,875 1096,873L1079,855C1083,842 1075,830 1063,835Z"/>
<path d="M723,1058V1093H771M715,1058H759V1104M724,1049V1053" stroke-width="4"/>
<rect x="884" y="1052" width="49" height="46" rx="3"/>
<path d="M1072,1053L1050,1098H1072Z" stroke-width="3"/>
<path d="M719,1222H730L736,1214H752L757,1222H766V1263H718Z"/>
<circle cx="742" cy="1241" r="11"/>
<path d="M908,1265H884V1216H925V1232M892,1227H914M892,1238H903"/>
<path d="M921,1231C915,1241 908,1246 908,1253a13,12 0 0 0 27,0C935,1246 927,1241 921,1231Z"/>
</g>
<path d="M727,846h10v10h-10Z" fill="#d8d8d8"/><path d="M724,872h38v12h-38Z" fill="#d8d8d8"/>
<path d="M892,846h10v10h-10ZM892,872h7v11h-7Z" fill="#d8d8d8"/>
<path d="M930,855L937,861L915,883L906,884L907,876Z" fill="#d8d8d8"/>
<text x="908.5" y="1083" font-family="Liberation Sans" font-size="16.5" font-weight="700" fill="#d8d8d8" text-anchor="middle">PPI</text>
<path d="M1078,1053L1100,1099H1078Z" fill="#dcdcdc"/>
<path d="M762,1216h7" stroke="#d8d8d8" stroke-width="3.6"/>
</svg>
</body></html>
